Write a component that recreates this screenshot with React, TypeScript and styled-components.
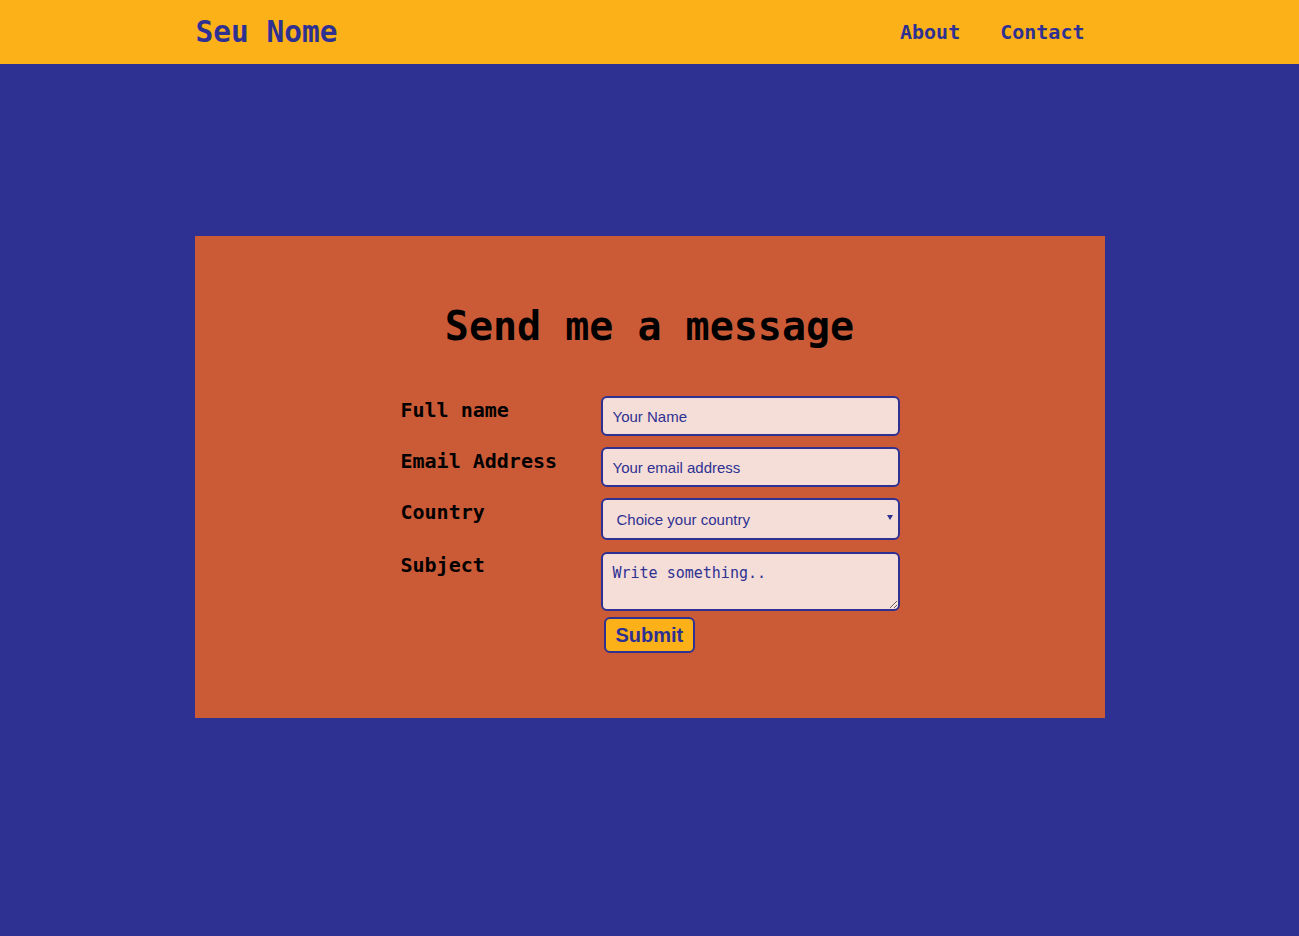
import React from "react";
import styled, { createGlobalStyle } from "styled-components";

const Global = createGlobalStyle`
  html, body { margin: 0; padding: 0; }
  body {
    background: #2e3192;
    font-family: "DejaVu Sans Mono", "Liberation Mono", monospace;
    min-height: 936px;
  }
  * { box-sizing: border-box; }
`;

const Header = styled.header`
  background: #fdb118;
  height: 64px;
`;

const HeaderInner = styled.div`
  width: 910px;
  margin: 0 auto;
  height: 100%;
  display: flex;
  align-items: center;
  justify-content: space-between;
`;

const Logo = styled.a`
  font-size: 29.5px;
  font-weight: 700;
  color: #2e3192;
  text-decoration: none;
  margin-left: 1px;
`;

const Nav = styled.nav`
  display: flex;
`;

const NavLink = styled.a`
  font-size: 20px;
  font-weight: 700;
  color: #2e3192;
  text-decoration: none;
  padding: 0 20px;
`;

const Main = styled.main`
  padding-top: 172px;
`;

const Card = styled.section`
  width: 910px;
  margin: 0 auto;
  background: #cb5a37;
  height: 482px;
  padding-top: 64px;
  display: flex;
  flex-direction: column;
  align-items: center;
`;

const Title = styled.h2`
  margin: 0 0 44px;
  font-size: 40px;
  font-weight: 700;
  color: #000;
  line-height: 52px;
`;

const Form = styled.form`
  width: 500px;
  margin-left: 2px;
  display: grid;
  grid-template-columns: 200px 300px;
  row-gap: 11px;
  align-items: start;
`;

const Label = styled.label`
  font-size: 20px;
  font-weight: 700;
  color: #000;
  padding-top: 2px;
  line-height: 24px;
`;

const fieldBase = `
  width: 299px;
  border: 2px solid #2e3192;
  border-radius: 6px;
  background: #f5ddd8;
  color: #2e3192;
  font-size: 15px;
  outline: none;
  &::placeholder { color: #2e3192; opacity: 1; }
`;

const Input = styled.input`
  ${fieldBase}
  height: 40px;
  padding: 0 10px;
  font-family: "Liberation Sans", Arial, sans-serif;
`;

const SelectWrap = styled.div`
  position: relative;
  width: 299px;
  height: 42px;
`;

const Select = styled.select`
  ${fieldBase}
  height: 42px;
  padding: 0 14px;
  appearance: none;
  -webkit-appearance: none;
  font-family: "Liberation Sans", Arial, sans-serif;
`;

const Arrow = styled.span`
  position: absolute;
  right: 7px;
  top: 17px;
  width: 0;
  height: 0;
  border-left: 3px solid transparent;
  border-right: 3px solid transparent;
  border-top: 5px solid #2e3192;
  pointer-events: none;
`;

const TextArea = styled.textarea`
  ${fieldBase}
  margin-top: 1px;
  height: 59px;
  padding: 10px;
  font-family: "DejaVu Sans Mono", monospace;
  display: block;
  resize: vertical;
`;

const Spacer = styled.div``;

const Submit = styled.button`
  justify-self: start;
  margin: -5px 0 0 3px;
  height: 36px;
  padding: 0 10px;
  background: #fdb118;
  border: 2px solid #2e3192;
  border-radius: 6px;
  color: #2e3192;
  font-family: "Liberation Sans", Arial, sans-serif;
  font-weight: 700;
  font-size: 20px;
  cursor: pointer;
`;

export default function App() {
  return (
    <>
      <Global />
      <Header>
        <HeaderInner>
          <Logo href="#">Seu Nome</Logo>
          <Nav>
            <NavLink href="#">About</NavLink>
            <NavLink href="#">Contact</NavLink>
          </Nav>
        </HeaderInner>
      </Header>
      <Main>
        <Card>
          <Title>Send me a message</Title>
          <Form onSubmit={(e) => e.preventDefault()}>
            <Label htmlFor="fname">Full name</Label>
            <Input id="fname" placeholder="Your Name" />
            <Label htmlFor="email">Email Address</Label>
            <Input id="email" placeholder="Your email address" />
            <Label htmlFor="country">Country</Label>
            <SelectWrap>
              <Select id="country" defaultValue="">
                <option value="">Choice your country</option>
                <option value="br">Brasil</option>
                <option value="pt">Portugal</option>
              </Select>
              <Arrow />
            </SelectWrap>
            <Label htmlFor="subject">Subject</Label>
            <TextArea id="subject" placeholder="Write something.." />
            <Spacer />
            <Submit type="submit">Submit</Submit>
          </Form>
        </Card>
      </Main>
    </>
  );
}
